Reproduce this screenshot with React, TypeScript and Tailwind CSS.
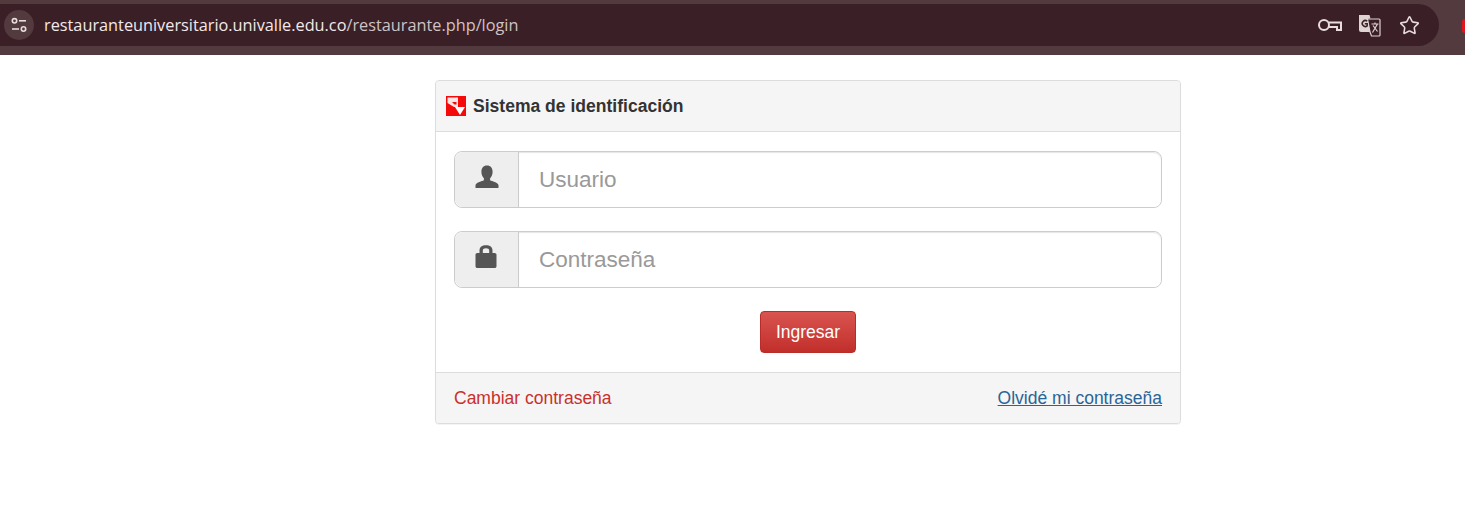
import { Star } from 'lucide-react'

function TuneIcon() {
  return (
    <svg width="18" height="18" viewBox="0 0 18 18" fill="none" stroke="#e8dcdd" strokeWidth="1.6">
      <circle cx="4.5" cy="4.8" r="2.2" />
      <path d="M9 4.800h7" />
      <path d="M2 13h7" />
      <circle cx="13.5" cy="13" r="2.2" />
    </svg>
  )
}

function KeyIcon() {
  return (
    <svg width="24" height="14" viewBox="0 0 24 14" fill="none" stroke="#e8dcdd" strokeWidth="2">
      <circle cx="6" cy="7" r="5" />
      <path d="M11 4.500h12v7.500h-4V9h-8" />
    </svg>
  )
}

function TranslateIcon() {
  return (
    <svg width="23" height="23" viewBox="0 0 23 23">
      <path d="M1 1h10.500l1 3.500h-2L13 18H3a2 2 0 0 1-2-2z" fill="#dfd3d4" />
      <path d="M9.500 5H21a1 1 0 0 1 1 1v15a1 1 0 0 1-1 1h-7.500l-1.500-4z" fill="#3a1f26" stroke="#dfd3d4" strokeWidth="1.2" />
      <path d="M9.200 7.200a3 3 0 1 0 0 4.600V9.700H6.800" fill="none" stroke="#3a1f26" strokeWidth="1.500" />
      <path d="M13.500 10h7M17 8.500V10M14.500 18.500l5-8.500M15 11.500l4.500 6" fill="none" stroke="#dfd3d4" strokeWidth="1.200" />
    </svg>
  )
}

function Logo() {
  return (
    <svg width="20" height="20" viewBox="0 0 20 20" className="shrink-0">
      <rect width="20" height="20" fill="#f50a0a" />
      <path d="M1.500 1.500H11V6H6l2.500 2.500H11V11H8L1.500 7z" fill="#fbe4e6" />
      <path d="M9 11h10l-5 8z" fill="#fff" />
      <path d="M10.500 1.500h1.500v9.500h-1.500z" fill="#fbe4e6" />
    </svg>
  )
}

function UserGlyph() {
  return (
    <svg width="24" height="24" viewBox="0 0 24 24" fill="#555">
      <path d="M12 0.500c3.700 0 5.600 2.600 5.600 6.200 0 2.700-1 5-2.500 6.500v2c2 1 7.400 2.100 8.400 4.800V23H.5v-3c1-2.700 6.400-3.800 8.400-4.800v-2C7.400 11.700 6.400 9.400 6.400 6.700 6.400 3.100 8.300.5 12 .5z" />
    </svg>
  )
}

function LockGlyph() {
  return (
    <svg width="24" height="24" viewBox="0 0 24 24" fill="#555" className="-translate-x-[1px]">
      <path fillRule="evenodd" d="M5.500 8V5.500C5.500 2.200 8 .3 12 .3s6.500 1.900 6.500 5.200V8h2.200c.9 0 1.800.8 1.800 1.800v11.400c0 1-.9 1.800-1.800 1.800H3.300c-.9 0-1.800-.8-1.800-1.800V9.800C1.500 8.800 2.400 8 3.300 8zm3.300 0h6.400V5.500c0-1.300-1.300-2.200-3.200-2.200s-3.200.9-3.200 2.200z" />
    </svg>
  )
}

function Field({ placeholder, type, icon }: { placeholder: string; type: string; icon: React.ReactNode }) {
  return (
    <div className="flex h-[57px] rounded-lg border border-[#ccc]">
      <span className="flex w-[64px] items-center justify-center rounded-l-lg border-r border-[#ccc] bg-[#eee] pb-[6px]">
        {icon}
      </span>
      <input
        type={type}
        placeholder={placeholder}
        className="min-w-0 flex-1 rounded-r-lg bg-white px-5 pt-[1px] text-[22.5px] text-[#555] shadow-[inset_0_1px_1px_rgba(0,0,0,0.1)] outline-none placeholder:text-[#999]"
      />
    </div>
  )
}

function App() {
  return (
    <div className="min-h-[522px] bg-white font-['Liberation_Sans',Arial,sans-serif]">
      {/* Browser bar */}
      <div className="h-[55px] bg-[#533a3f] pt-[4px] pr-[26px]">
        <div className="flex h-[42px] items-center rounded-r-full rounded-l-[21px] bg-[#3a1f26] pl-[4px] pr-[19px]">
          <span className="flex h-[30px] w-[30px] items-center justify-center rounded-full bg-[#533a3f]">
            <TuneIcon />
          </span>
          <div className="ml-[10px] flex-1 font-['Open_Sans',sans-serif] text-[16.3px] text-[#f3e9ea]">
            restauranteuniversitario.univalle.edu.co<span className="text-[#cfc3c5]">/restaurante.php/login</span>
          </div>
          <div className="flex items-center">
            <KeyIcon />
            <span className="ml-[16px]">
              <TranslateIcon />
            </span>
            <span className="ml-[18px]">
              <Star size={21} strokeWidth={1.8} color="#e8dcdd" />
            </span>
          </div>
        </div>
      </div>

      {/* Login panel */}
      <div className="ml-[435px] mt-[25px] w-[746px] rounded border border-[#ddd] bg-white shadow-[0_1px_1px_rgba(0,0,0,0.05)]">
        <div className="flex h-[51px] items-center gap-[7px] rounded-t border-b border-[#ddd] bg-[#f5f5f5] pl-[10px]">
          <Logo />
          <h3 className="pt-[1px] text-[17.55px] font-bold text-[#333]">Sistema de identificación</h3>
        </div>
        <div className="flex flex-col px-[18px] pt-[19px] pb-[19px]">
          <Field placeholder="Usuario" type="text" icon={<UserGlyph />} />
          <div className="mt-[23px]">
            <Field placeholder="Contraseña" type="password" icon={<LockGlyph />} />
          </div>
          <button className="mx-auto mt-[23px] h-[42px] w-[96px] rounded border border-[#b92c28] bg-gradient-to-b from-[#d9534f] to-[#c12e2a] text-[17.5px] text-white">
            Ingresar
          </button>
        </div>
        <div className="flex h-[51px] items-center justify-between rounded-b border-t border-[#ddd] bg-[#f5f5f5] px-[18px] text-[17.5px]">
          <a className="text-[#c9302c]">Cambiar contraseña</a>
          <a className="text-[#2a6496] underline">Olvidé mi contraseña</a>
        </div>
      </div>

      {/* Edge of the next toolbar icon */}
      <div className="absolute right-0 top-[19px] h-[14px] w-[3px] rounded-l-full bg-[#e0161c]" />
    </div>
  )
}

export default App
